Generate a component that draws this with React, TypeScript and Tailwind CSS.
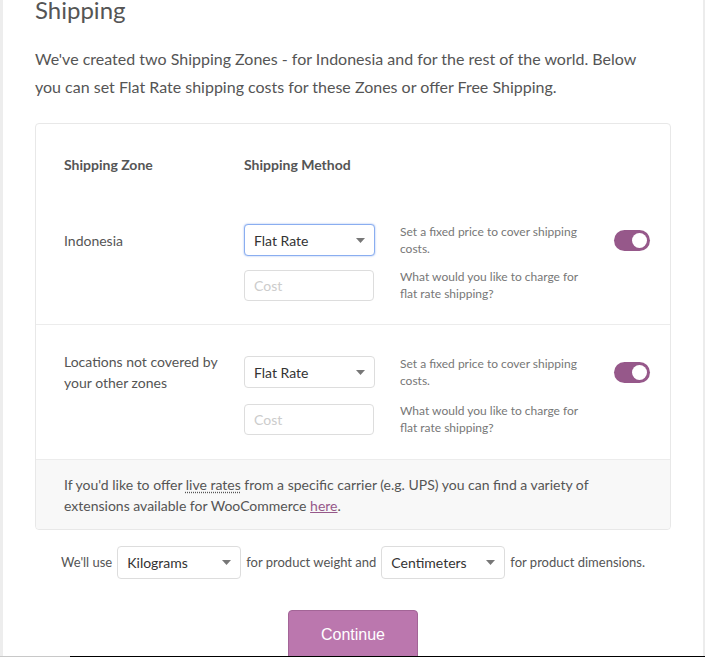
import React from "react";

const font = { fontFamily: "Lato, 'Liberation Sans', sans-serif" };

function Caret() {
  return (
    <svg width="9" height="5" viewBox="0 0 9 5" className="shrink-0">
      <path d="M0 0 L9 0 L4.5 5 Z" fill="#777" />
    </svg>
  );
}

function Select({ label, focused, w }: { label: string; focused?: boolean; w: string }) {
  return (
    <div
      className={`${w} shrink-0 flex items-center justify-between pl-[9px] pr-[9px] rounded-[4px] bg-white border ${
        focused ? "border-[#8aaef0] shadow-[0_0_2px_rgba(80,130,230,0.6)]" : "border-[#dddddd]"
      } text-[14px] text-[#333]`}
    >
      <span>{label}</span>
      <Caret />
    </div>
  );
}

function Toggle() {
  return (
    <div className="w-[36px] h-[21px] shrink-0 rounded-full bg-[#96588a] flex items-center justify-end pr-[3px]">
      <div className="w-[15px] h-[15px] rounded-full bg-white" />
    </div>
  );
}

function ZoneRow({
  zone,
  border,
  gap,
  pad,
}: {
  zone: React.ReactNode;
  border?: boolean;
  gap: string;
  pad: string;
}) {
  return (
    <div className={`pl-[28px] pr-[20px] ${pad} ${border ? "border-b border-[#ececec]" : ""}`}>
      <div className="flex items-center">
        <div className="w-[180px] shrink-0 text-[14px] leading-[21px] text-[#555]">{zone}</div>
        <Select label="Flat Rate" w="w-[131px] h-[32px]" focused={zone === "Indonesia"} />
        <div className="ml-[25px] w-[190px] shrink-0 text-[12px] leading-[17px] text-[#777]">
          Set a fixed price to cover shipping costs.
        </div>
        <div className="ml-[24px]">
          <Toggle />
        </div>
      </div>
      <div className={`flex items-center ${gap}`}>
        <div className="w-[180px] shrink-0" />
        <div className="w-[130px] h-[31px] shrink-0 rounded-[4px] border border-[#dddddd] flex items-center pl-[9px] text-[14px] text-[#cccccc]">
          Cost
        </div>
        <div className="ml-[26px] w-[190px] shrink-0 text-[12px] leading-[17px] text-[#777]">
          What would you like to charge for flat rate shipping?
        </div>
      </div>
    </div>
  );
}

export default function App() {
  return (
    <div style={font} className="relative w-[705px] h-[657px] overflow-hidden bg-white flex">
      <div className="w-[3px] bg-[#ededed]" />
      <div className="flex-1 flex flex-col px-[32px]">
        <h1 className="text-[24px] leading-[30px] text-[#555] -mt-[5px] font-normal">Shipping</h1>
        <p className="mt-[20px] w-[615px] text-[16px] leading-[28px] text-[#555]">
          We've created two Shipping Zones - for Indonesia and for the rest of the world. Below you can set Flat
          Rate shipping costs for these Zones or offer Free Shipping.
        </p>
        <div className="mt-[22px] border border-[#e8e8e8] rounded-[4px] w-[636px]">
          <div className="flex px-[28px] pt-[31px] pb-[23px] text-[14px] leading-[20px] font-bold text-[#555]">
            <div className="w-[180px]">Shipping Zone</div>
            <div>Shipping Method</div>
          </div>
          <ZoneRow zone="Indonesia" border gap="mt-[11px]" pad="pt-[25px] pb-[22px]" />
          <ZoneRow
            gap="mt-[9px]"
            pad="pt-[26px] pb-[23px]"
            zone={
              <>
                Locations not covered by
                <br />
                your other zones
              </>
            }
          />
          <div className="bg-[#f8f8f8] border-t border-[#ececec] px-[28px] pt-[14px] pb-[13px] text-[14px] leading-[21px] text-[#555] rounded-b-[4px]">
            If you'd like to offer{" "}
            <span className="underline decoration-dotted underline-offset-2">live rates</span> from a specific
            carrier (e.g. UPS) you can find a variety of extensions available for WooCommerce{" "}
            <span className="underline text-[#96588a]">here</span>.
          </div>
        </div>
        <div className="mt-[16px] flex items-center justify-center gap-[5px] text-[13px] text-[#555] w-[636px]">
          <span>We'll use</span>
          <Select label="Kilograms" w="w-[124px] h-[33px]" />
          <span>for product weight and</span>
          <Select label="Centimeters" w="w-[124px] h-[33px]" />
          <span>for product dimensions.</span>
        </div>
        <div className="mt-[31px] flex justify-center w-[636px]">
          <button
            style={{ fontFamily: "'Liberation Sans', Arial, sans-serif" }}
            className="w-[130px] h-[50px] rounded-[4px] bg-[#bb77ae] text-white text-[16px] border border-[#a36597]"
          >
            Continue
          </button>
        </div>
      </div>
      <div className="w-[2px] bg-[#ececec]" />
      <div className="absolute left-0 bottom-0 w-full h-[1px] flex">
        <div className="w-[70px] bg-[#c8c8c8]" />
        <div className="flex-1 bg-black" />
      </div>
    </div>
  );
}
